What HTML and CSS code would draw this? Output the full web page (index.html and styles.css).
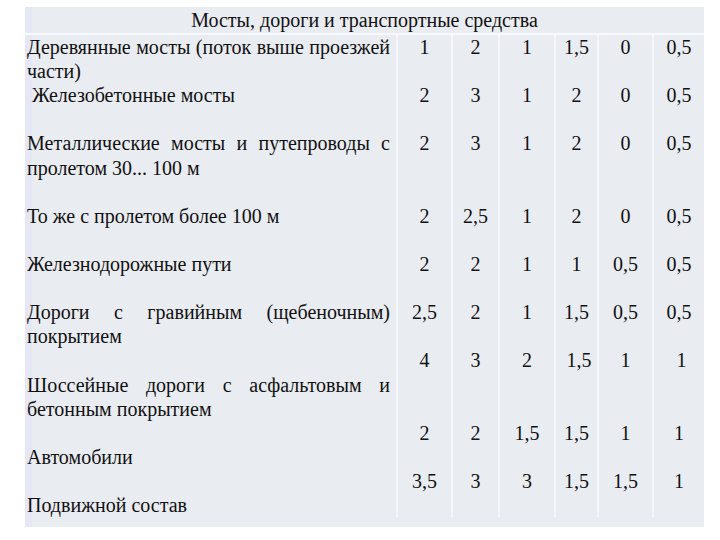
FILE: index.html
```html
<!DOCTYPE html>
<html lang="ru">
<head>
<meta charset="utf-8">
<link rel="stylesheet" href="styles.css">
</head>
<body>
<div class="table">
  <div class="head">Мосты, дороги и транспортные средства</div>
  <div class="body">
    <div class="col name">
      <div class="ln just">Деревянные мосты (поток выше проезжей</div>
      <div class="ln">части)</div>
      <div class="ln">&nbsp;Железобетонные мосты</div>
      <div class="ln"></div>
      <div class="ln just">Металлические мосты и путепроводы с</div>
      <div class="ln">пролетом 30... 100 м</div>
      <div class="ln"></div>
      <div class="ln">То же с пролетом более 100 м</div>
      <div class="ln"></div>
      <div class="ln">Железнодорожные пути</div>
      <div class="ln"></div>
      <div class="ln just">Дороги с гравийным (щебеночным)</div>
      <div class="ln">покрытием</div>
      <div class="ln"></div>
      <div class="ln just">Шоссейные дороги с асфальтовым и</div>
      <div class="ln">бетонным покрытием</div>
      <div class="ln"></div>
      <div class="ln">Автомобили</div>
      <div class="ln"></div>
      <div class="ln">Подвижной состав</div>
    </div>
    <div class="col num">
      <div class="ln">1</div><div class="ln"></div>
      <div class="ln">2</div><div class="ln"></div>
      <div class="ln">2</div><div class="ln"></div><div class="ln"></div>
      <div class="ln">2</div><div class="ln"></div>
      <div class="ln">2</div><div class="ln"></div>
      <div class="ln">2,5</div><div class="ln"></div>
      <div class="ln">4</div><div class="ln"></div><div class="ln"></div>
      <div class="ln">2</div><div class="ln"></div>
      <div class="ln">3,5</div>
    </div>
    <div class="col num">
      <div class="ln">2</div><div class="ln"></div>
      <div class="ln">3</div><div class="ln"></div>
      <div class="ln">3</div><div class="ln"></div><div class="ln"></div>
      <div class="ln">2,5</div><div class="ln"></div>
      <div class="ln">2</div><div class="ln"></div>
      <div class="ln">2</div><div class="ln"></div>
      <div class="ln">3</div><div class="ln"></div><div class="ln"></div>
      <div class="ln">2</div><div class="ln"></div>
      <div class="ln">3</div>
    </div>
    <div class="col num">
      <div class="ln">1</div><div class="ln"></div>
      <div class="ln">1</div><div class="ln"></div>
      <div class="ln">1</div><div class="ln"></div><div class="ln"></div>
      <div class="ln">1</div><div class="ln"></div>
      <div class="ln">1</div><div class="ln"></div>
      <div class="ln">1</div><div class="ln"></div>
      <div class="ln">2</div><div class="ln"></div><div class="ln"></div>
      <div class="ln">1,5</div><div class="ln"></div>
      <div class="ln">3</div>
    </div>
    <div class="col num">
      <div class="ln">1,5</div><div class="ln"></div>
      <div class="ln">2</div><div class="ln"></div>
      <div class="ln">2</div><div class="ln"></div><div class="ln"></div>
      <div class="ln">2</div><div class="ln"></div>
      <div class="ln">1</div><div class="ln"></div>
      <div class="ln">1,5</div><div class="ln"></div>
      <div class="ln">&nbsp;1,5</div><div class="ln"></div><div class="ln"></div>
      <div class="ln">1,5</div><div class="ln"></div>
      <div class="ln">1,5</div>
    </div>
    <div class="col num">
      <div class="ln">0</div><div class="ln"></div>
      <div class="ln">0</div><div class="ln"></div>
      <div class="ln">0</div><div class="ln"></div><div class="ln"></div>
      <div class="ln">0</div><div class="ln"></div>
      <div class="ln">0,5</div><div class="ln"></div>
      <div class="ln">0,5</div><div class="ln"></div>
      <div class="ln">1</div><div class="ln"></div><div class="ln"></div>
      <div class="ln">1</div><div class="ln"></div>
      <div class="ln">1,5</div>
    </div>
    <div class="col num">
      <div class="ln">0,5</div><div class="ln"></div>
      <div class="ln">0,5</div><div class="ln"></div>
      <div class="ln">0,5</div><div class="ln"></div><div class="ln"></div>
      <div class="ln">0,5</div><div class="ln"></div>
      <div class="ln">0,5</div><div class="ln"></div>
      <div class="ln">0,5</div><div class="ln"></div>
      <div class="ln">&nbsp;1</div><div class="ln"></div><div class="ln"></div>
      <div class="ln">1</div><div class="ln"></div>
      <div class="ln">1</div>
    </div>
  </div>
</div>
</body>
</html>
```

FILE: styles.css
```css
html, body {
  margin: 0;
  padding: 0;
  background: #ffffff;
}
body {
  font-family: "Liberation Serif", "Times New Roman", serif;
  font-size: 20px;
  color: #111111;
}
.table {
  margin: 7px 0 0 25px;
  width: 679px;
  background: #e9ecf1;
  box-shadow: inset 7px 0 0 #e6e7f4;
}
.head {
  height: 26px;
  line-height: 26px;
  text-align: center;
  border-bottom: 2px solid #f7f8fb;
}
.body {
  display: grid;
  grid-template-columns: 371px 55px 47px 56px 43px 55px 52px;
  padding-bottom: 10px;
}
.col {
  display: flex;
  flex-direction: column;
}
.ln {
  height: 24.12px;
  line-height: 24px;
  white-space: pre;
}
.name {
  padding-left: 2px;
  padding-right: 6px;
}
.name .ln {
  white-space: nowrap;
  text-align: left;
}
.name .ln.just {
  text-align: justify;
  text-align-last: justify;
}
.num {
  border-left: 2px solid #f6f7fa;
  text-align: center;
}
```
